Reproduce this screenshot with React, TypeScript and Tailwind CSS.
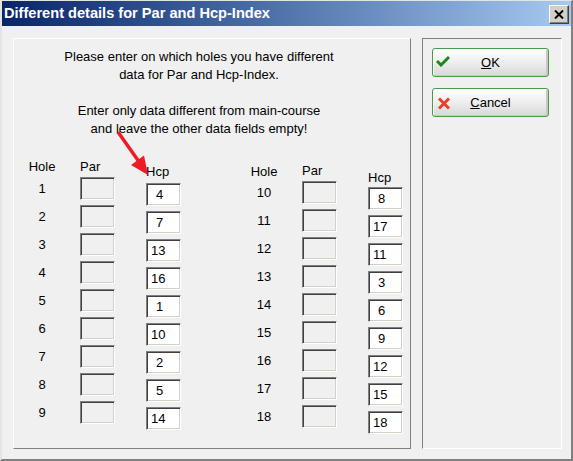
import React from "react";

const font = { fontFamily: '"Liberation Sans", Arial, sans-serif' };

const leftHcp = ["4", "7", "13", "16", "1", "10", "2", "5", "14"];
const rightHcp = ["8", "17", "11", "3", "6", "9", "12", "15", "18"];

// sunken edit box, white when enabled, grey when disabled
function EditBox({ value, disabled }: { value?: string; disabled?: boolean }) {
  const pad = value && value.length === 1 ? "pl-[9px]" : "pl-[4px]";
  return (
    <div
      className={`w-[35px] h-[23px] flex items-center border border-t-[#808080] border-l-[#808080] border-r-white border-b-white shadow-[inset_1px_1px_0_#404040,inset_-1px_-1px_0_#d4d0c8] text-[13px] text-black ${pad} ${
        disabled ? "bg-[#f0f0f0]" : "bg-white"
      }`}
    >
      {value}
    </div>
  );
}

function HoleColumn({ start, top, gap }: { start: number; top: string; gap: string }) {
  return (
    <div className={`w-[40px] flex flex-col items-center ${top}`}>
      <div className="h-[16px] leading-[16px] text-[13px]">Hole</div>
      <div className={`flex flex-col gap-[5px] ${gap}`}>
        {Array.from({ length: 9 }, (_, i) => (
          <div key={i} className="h-[23px] flex items-center justify-center text-[13px]">
            {start + i}
          </div>
        ))}
      </div>
    </div>
  );
}

function BoxColumn({
  title,
  values,
  disabled,
  top,
  gap,
  ml,
}: {
  title: string;
  values?: string[];
  disabled?: boolean;
  top: string;
  gap: string;
  ml: string;
}) {
  return (
    <div className={`w-[35px] flex flex-col ${top} ${ml}`}>
      <div className="h-[16px] leading-[16px] text-[13px]">{title}</div>
      <div className={`flex flex-col gap-[5px] ${gap}`}>
        {Array.from({ length: 9 }, (_, i) => (
          <EditBox key={i} value={values?.[i]} disabled={disabled} />
        ))}
      </div>
    </div>
  );
}

function DialogButton({ icon, children }: { icon: React.ReactNode; children: React.ReactNode }) {
  return (
    <button className="relative w-[117px] h-[29px] rounded-[3px] border border-[#4a9a4a] bg-gradient-to-b from-white via-[#eeeeee] to-[#d8d8d8] shadow-[inset_1px_1px_0_#ffffff,inset_-2px_-1px_0_#c8c8c8] flex items-center justify-center text-[13px] text-black">
      <span className="absolute left-[3px] top-[6px]">{icon}</span>
      {children}
    </button>
  );
}

export default function App() {
  return (
    <div
      className="w-[573px] h-[461px] bg-[#f0f0f0] flex flex-col border-l-[2px] border-t-[1px] border-r-[2px] border-b-[2px] border-l-[#e4e4e4] border-t-[#e4e4e4] border-r-[#808080] border-b-[#808080] relative"
      style={font}
    >
      {/* Title bar */}
      <div className="h-[25px] flex items-center justify-between pl-[2px] pr-[2px] bg-gradient-to-r from-[#0a246a] to-[#a6caf0]">
        <span className="text-white font-bold text-[14.6px] leading-none">Different details for Par and Hcp-Index</span>
        <div className="w-[20px] h-[19px] mt-[2px] bg-[#d4d0c8] border border-t-white border-l-white border-r-[#404040] border-b-[#404040] shadow-[inset_-1px_-1px_0_#808080] flex items-center justify-center">
          <svg width="10" height="9" viewBox="0 0 10 9">
            <path d="M1 0.5 L9 8.5 M9 0.5 L1 8.5" stroke="#000" strokeWidth="2" />
          </svg>
        </div>
      </div>

      {/* Body */}
      <div className="flex pl-[11px] pt-[12px]">
        {/* Left panel */}
        <div className="w-[398px] h-[411px] border border-t-white border-l-white border-r-[#808080] border-b-[#808080] flex flex-col">
          <div className="w-[370px] mt-[9px] text-center text-[13px] leading-[18px] text-black">
            Please enter on which holes you have different
            <br />
            data for Par and Hcp-Index.
            <br />
            <br />
            Enter only data different from main-course
            <br />
            and leave the other data fields empty!
          </div>

          <div className="flex items-start mt-[21px] pl-[8px]">
            <HoleColumn start={1} top="mt-0" gap="mt-[2px]" />
            <BoxColumn title="Par" disabled top="mt-0" gap="mt-[2px]" ml="ml-[18px]" />
            <BoxColumn title="Hcp" values={leftHcp} top="mt-[5px]" gap="mt-[3px]" ml="ml-[31px]" />
            <div className="ml-[63px]">
              <HoleColumn start={10} top="mt-[5px]" gap="mt-[1px]" />
            </div>
            <BoxColumn title="Par" disabled top="mt-[4px]" gap="mt-[2px]" ml="ml-[18px]" />
            <BoxColumn title="Hcp" values={rightHcp} top="mt-[11px]" gap="mt-[1px]" ml="ml-[31px]" />
          </div>
        </div>

        {/* Right panel */}
        <div className="ml-[11px] w-[140px] h-[411px] border border-t-[#808080] border-l-[#808080] border-r-white border-b-white flex flex-col gap-[11px] pl-[9px] pt-[9px]">
          <DialogButton
            icon={
              <svg width="14" height="12" viewBox="0 0 14 12">
                <path d="M1 6 L5 10 L13 2" fill="none" stroke="#1a8a1a" strokeWidth="3" />
              </svg>
            }
          >
            <span>
              <span className="underline">O</span>K
            </span>
          </DialogButton>
          <DialogButton
            icon={
              <svg width="14" height="13" viewBox="0 0 14 13" className="mt-[2px] ml-[1px]">
                <path d="M2 1.5 L12 11.5 M12 1.5 L2 11.5" stroke="#e8402a" strokeWidth="3" />
              </svg>
            }
          >
            <span>
              <span className="underline">C</span>ancel
            </span>
          </DialogButton>
        </div>
      </div>

      {/* Red arrow annotation over the dialog */}
      <svg
        className="absolute left-[108px] top-[124px] pointer-events-none"
        width="44"
        height="56"
        viewBox="0 0 44 56"
      >
        <line x1="8" y1="7" x2="28.5" y2="36" stroke="#ee1c24" strokeWidth="3.5" />
        <polygon points="38,50 21,40 34,30.5" fill="#ee1c24" />
      </svg>
    </div>
  );
}
